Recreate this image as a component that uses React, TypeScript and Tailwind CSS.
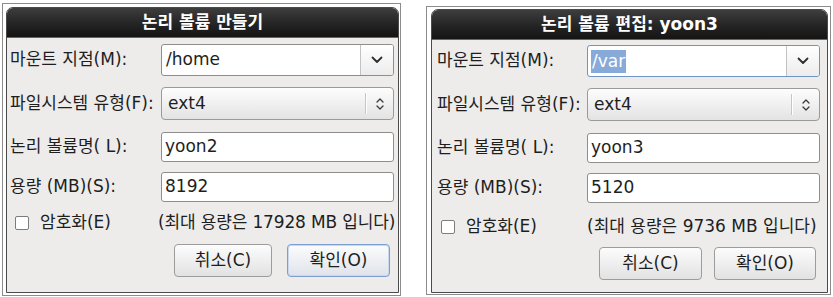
import React from "react";

type Props = {
  title: string;
  mount: string;
  fs: string;
  name: string;
  size: string;
  maxText: string;
  focused?: boolean;
  okFocused?: boolean;
  frameCls: string;
  labelCls: string;
  checkRowCls: string;
  checkCls: string;
  maxCls: string;
  btnRowCls: string;
  cancelCls: string;
  okCls: string;
  row1Cls: string;
};

function ChevronDown() {
  return (
    <svg width="12" height="8" viewBox="0 0 12 8" fill="none">
      <path d="M1.5 1.5 L6 6 L10.5 1.5" stroke="#2e2e2e" strokeWidth="1.8" strokeLinecap="round" strokeLinejoin="round" />
    </svg>
  );
}

function UpDown() {
  return (
    <svg width="8" height="14" viewBox="0 0 8 14" fill="none">
      <path d="M1 5 L4 2 L7 5" stroke="#3a3a3a" strokeWidth="1.3" strokeLinecap="round" strokeLinejoin="round" />
      <path d="M1 9 L4 12 L7 9" stroke="#3a3a3a" strokeWidth="1.3" strokeLinecap="round" strokeLinejoin="round" />
    </svg>
  );
}

function Dialog(p: Props) {
  return (
    <div className={p.frameCls}>
      <div className="flex h-full flex-col overflow-hidden rounded-t-[7px] border border-[#4a4a4a] bg-[#edeceb]">
        <div className="flex h-[30px] shrink-0 items-center justify-center border-b border-b-[#4d6a96] bg-gradient-to-b from-[#3e3e3e] via-[#262626] to-[#141414] text-[17px] font-bold text-white">
          <span className="mt-[1px]">{p.title}</span>
        </div>
        <div className="flex flex-1 flex-col text-[17px] text-[#1e1e1e]">
          {/* Row 1: mount point combo entry */}
          <div className={p.row1Cls}>
            <div className={p.labelCls}>마운트 지점(M):</div>
            <div
              className={
                p.focused
                  ? "flex h-full w-[233px] overflow-hidden rounded-[3px] border border-[#6f94c6] bg-white"
                  : "flex h-full w-[233px] overflow-hidden rounded-[3px] border border-[#8e8e8e] bg-white"
              }
            >
              <div className="flex flex-1 items-center pl-[3px]">
                {p.focused ? (
                  <span className="bg-[#88aad8] px-[1px] leading-[23px] text-white">{p.mount}</span>
                ) : (
                  <span className="pl-[1px]">{p.mount}</span>
                )}
              </div>
              <div className="flex w-[33px] items-center justify-center border-l border-l-[#c2c2c2] bg-gradient-to-b from-[#ffffff] to-[#ececec]">
                <ChevronDown />
              </div>
            </div>
          </div>
          {/* Row 2: filesystem combo */}
          <div className="mt-[11px] flex h-[33px] items-center">
            <div className={p.labelCls}>파일시스템 유형(F):</div>
            <div className="flex h-full w-[233px] items-center rounded-[4px] border border-[#9a9a9a] bg-gradient-to-b from-[#fdfdfd] to-[#e3e3e3]">
              <span className="flex-1 pl-[6px]">{p.fs}</span>
              <div className="h-[21px] w-[2px] border-l border-l-[#c6c6c6] bg-white" />
              <div className="flex w-[26px] items-center justify-center">
                <UpDown />
              </div>
            </div>
          </div>
          {/* Row 3 */}
          <div className="mt-[12px] flex h-[30px] items-center">
            <div className={p.labelCls}>논리 볼륨명( L):</div>
            <div className="flex h-full w-[233px] items-center rounded-[3px] border border-[#8e8e8e] bg-white pl-[3px]">
              {p.name}
            </div>
          </div>
          {/* Row 4 */}
          <div className="mt-[10px] flex h-[30px] items-center">
            <div className={p.labelCls}>용량 (MB)(S):</div>
            <div className="flex h-full w-[233px] items-center rounded-[3px] border border-[#8e8e8e] bg-white pl-[3px]">
              {p.size}
            </div>
          </div>
          {/* Checkbox row */}
          <div className={p.checkRowCls}>
            <div className={p.checkCls}>
              <span className="h-[14px] w-[14px] rounded-[2px] border border-[#7c7c7c] bg-white" />
              <span className="ml-[11px]">암호화(E)</span>
            </div>
            <div className={p.maxCls}>{p.maxText}</div>
          </div>
          {/* Buttons */}
          <div className={p.btnRowCls}>
            <button className={p.cancelCls}>취소(C)</button>
            <button className={p.okCls}>확인(O)</button>
          </div>
        </div>
      </div>
    </div>
  );
}

export default function App() {
  return (
    <div className="flex h-[297px] w-[833px] items-start overflow-hidden bg-white font-['DejaVu_Sans','Noto_Sans_CJK_KR',sans-serif]">
      <Dialog
        title="논리 볼륨 만들기"
        mount="/home"
        fs="ext4"
        name="yoon2"
        size="8192"
        maxText="(최대 용량은 17928 MB 입니다)"
        okFocused
        frameCls="ml-[2px] mt-[3px] h-[293px] w-[399px] shrink-0 border border-[#8c8c8c] pb-[2px] pl-[3px] pr-[1px] pt-[3px]"
        row1Cls="mt-[6px] flex h-[32px] items-center"
        labelCls="w-[154px] shrink-0 whitespace-nowrap pl-[3px]"
        checkRowCls="mt-[12px] flex h-[18px] items-center"
        checkCls="flex w-[151px] shrink-0 items-center pl-[8px]"
        maxCls="whitespace-nowrap tracking-[-0.15px]"
        btnRowCls="mt-[12px] flex h-[33px] justify-end gap-[15px] pr-[8px]"
        cancelCls="h-full w-[98px] rounded-[4px] border border-[#9c9c9c] bg-gradient-to-b from-[#fcfcfc] to-[#e2e2e2] text-[17px] text-[#1e1e1e]"
        okCls="h-full w-[103px] rounded-[4px] border border-[#7b9fd0] bg-gradient-to-b from-[#fcfcfc] to-[#dfe3ea] text-[17px] text-[#1e1e1e] shadow-[inset_0_0_0_1px_#c9d8ee]"
      />
      <Dialog
        title="논리 볼륨 편집: yoon3"
        mount="/var"
        fs="ext4"
        name="yoon3"
        size="5120"
        maxText="(최대 용량은 9736 MB 입니다)"
        focused
        frameCls="ml-[25px] mt-[6px] h-[289px] w-[405px] shrink-0 border border-[#8c8c8c] pb-[1px] pl-[4px] pr-[2px] pt-[2px]"
        row1Cls="mt-[5px] flex h-[32px] items-center"
        labelCls="w-[155px] shrink-0 whitespace-nowrap pl-[5px]"
        checkRowCls="mt-[15px] flex h-[18px] items-center"
        checkCls="flex w-[155px] shrink-0 items-center pl-[9px]"
        maxCls="whitespace-nowrap"
        btnRowCls="mt-[11px] flex h-[33px] justify-end gap-[12px] pr-[11px]"
        cancelCls="h-full w-[103px] rounded-[4px] border border-[#9c9c9c] bg-gradient-to-b from-[#fcfcfc] to-[#e2e2e2] text-[17px] text-[#1e1e1e]"
        okCls="h-full w-[102px] rounded-[4px] border border-[#9c9c9c] bg-gradient-to-b from-[#fcfcfc] to-[#e2e2e2] text-[17px] text-[#1e1e1e]"
      />
    </div>
  );
}
